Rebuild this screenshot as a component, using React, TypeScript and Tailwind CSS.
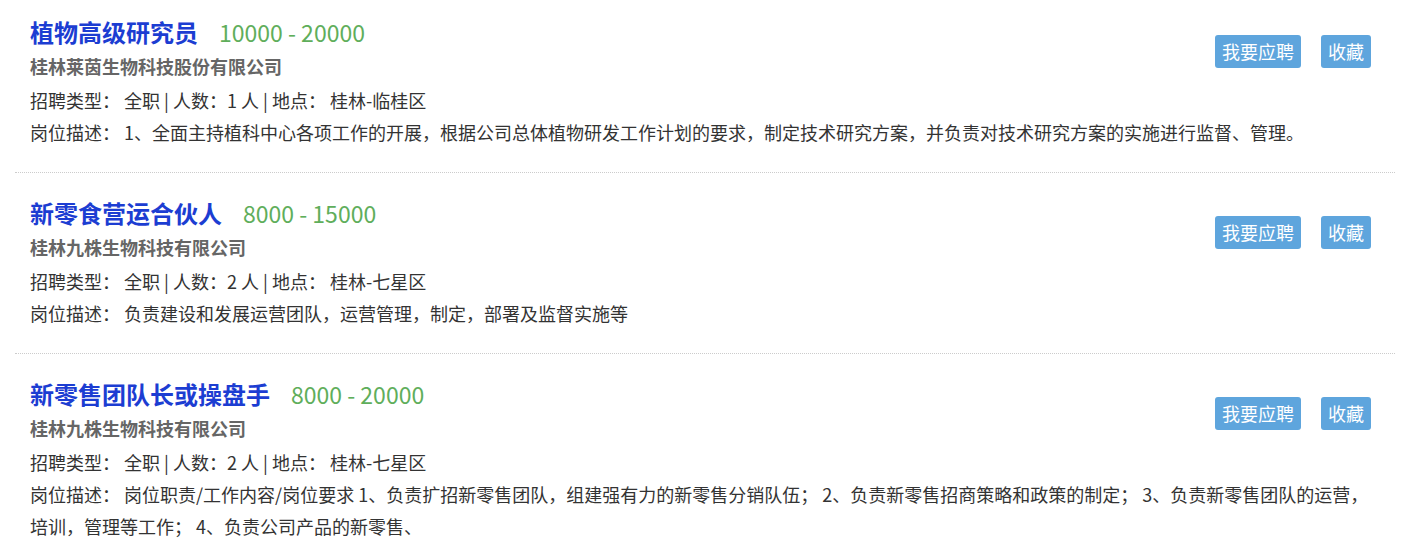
const jobs = [
  {
    title: "植物高级研究员",
    salary: "10000 - 20000",
    company: "桂林莱茵生物科技股份有限公司",
    count: 1,
    place: "桂林-临桂区",
    desc: "1、全面主持植科中心各项工作的开展，根据公司总体植物研发工作计划的要求，制定技术研究方案，并负责对技术研究方案的实施进行监督、管理。",
  },
  {
    title: "新零食营运合伙人",
    salary: "8000 - 15000",
    company: "桂林九株生物科技有限公司",
    count: 2,
    place: "桂林-七星区",
    desc: "负责建设和发展运营团队，运营管理，制定，部署及监督实施等",
  },
  {
    title: "新零售团队长或操盘手",
    salary: "8000 - 20000",
    company: "桂林九株生物科技有限公司",
    count: 2,
    place: "桂林-七星区",
    desc: "岗位职责/工作内容/岗位要求 1、负责扩招新零售团队，组建强有力的新零售分销队伍； 2、负责新零售招商策略和政策的制定； 3、负责新零售团队的运营，培训，管理等工作； 4、负责公司产品的新零售、",
  },
];

export default function App() {
  return (
    <div className="bg-white min-h-screen font-['Noto_Sans_CJK_SC','Noto_Sans',sans-serif] text-[#333]">
      <ul className="mx-[15px] w-[1380px]">
        {jobs.map((job, i) => (
          <li
            key={i}
            className={`flow-root px-[15px] pb-[24px] border-b border-dotted border-[#ccc] ${
              i === 0 ? "pt-[14px]" : "pt-[22px]"
            }`}
          >
            <div className="float-right flex gap-[20px] mt-[21px] mr-[9px]">
              <button className="h-[33px] px-[7px] rounded-[3px] bg-[#5ea5dd] text-white text-[18px] leading-[33px]">
                我要应聘
              </button>
              <button className="h-[33px] px-[7px] rounded-[3px] bg-[#5ea5dd] text-white text-[18px] leading-[33px]">
                收藏
              </button>
            </div>
            <div className="flex items-baseline h-[36px] leading-[36px]">
              <h3 className="text-[24px] font-bold text-[#1c3dd2]">{job.title}</h3>
              <span className="ml-[21px] text-[23px] text-[#5fae5b]">{job.salary}</span>
            </div>
            <p className="text-[18px] leading-[32px] font-bold text-[#666]">{job.company}</p>
            <p className="mt-[2px] text-[18px] leading-[32px]">
              招聘类型：&nbsp;全职 | 人数：{job.count} 人 | 地点：&nbsp;{job.place}
            </p>
            <p className="text-[18px] leading-[32px]">岗位描述：&nbsp;{job.desc}</p>
          </li>
        ))}
      </ul>
    </div>
  );
}
